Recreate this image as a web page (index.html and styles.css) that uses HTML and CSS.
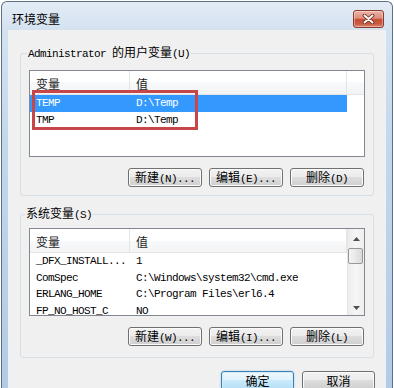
FILE: index.html
```html
<!DOCTYPE html>
<html lang="zh-CN">
<head>
  <meta charset="UTF-8">
  <title>环境变量</title>
  <link rel="stylesheet" href="styles.css">
</head>
<body>
  <div class="window">
    <div class="titlebar">
      <span class="title">环境变量</span>
      <div class="close">
        <svg width="13" height="10" viewBox="0 0 13 10">
          <path d="M2.5 1.5 L10.5 8.5 M10.5 1.5 L2.5 8.5" stroke="#6a2418" stroke-width="3.6" stroke-linecap="round"/>
          <path d="M2.5 1.5 L10.5 8.5 M10.5 1.5 L2.5 8.5" stroke="#fff" stroke-width="2" stroke-linecap="round"/>
        </svg>
      </div>
    </div>

    <div class="client">
      <fieldset class="group user">
        <legend><span class="mono">Administrator </span>的用户变量<span class="mono">(U)</span></legend>
        <div class="listbox">
          <div class="lv-head"><div class="c1">变量</div><div class="c2">值</div></div>
          <div class="row sel"><div class="c1 mono">TEMP</div><div class="c2 mono">D:\Temp</div></div>
          <div class="row"><div class="c1 mono">TMP</div><div class="c2 mono">D:\Temp</div></div>
          <div class="mark"></div>
        </div>
        <div class="btnrow">
          <button class="btn">新建<span class="mono">(N)...</span></button>
          <button class="btn">编辑<span class="mono">(E)...</span></button>
          <button class="btn">删除<span class="mono">(D)</span></button>
        </div>
      </fieldset>

      <fieldset class="group sys">
        <legend>系统变量<span class="mono">(S)</span></legend>
        <div class="listbox">
          <div class="lv">
            <div class="lv-head"><div class="c1">变量</div><div class="c2">值</div></div>
            <div class="row"><div class="c1 mono">_DFX_INSTALL...</div><div class="c2 mono">1</div></div>
            <div class="row"><div class="c1 mono">ComSpec</div><div class="c2 mono">C:\Windows\system32\cmd.exe</div></div>
            <div class="row"><div class="c1 mono">ERLANG_HOME</div><div class="c2 mono">C:\Program Files\erl6.4</div></div>
            <div class="row"><div class="c1 mono">FP_NO_HOST_C</div><div class="c2 mono">NO</div></div>
          </div>
          <div class="vscroll">
            <div class="arrow">
              <svg width="7" height="4" viewBox="0 0 7 4"><path d="M0 4 L3.5 0 L7 4 Z" fill="#505050"/></svg>
            </div>
            <div class="thumb"></div>
            <div class="track"></div>
            <div class="arrow">
              <svg width="7" height="4" viewBox="0 0 7 4"><path d="M0 0 L3.5 4 L7 0 Z" fill="#505050"/></svg>
            </div>
          </div>
        </div>
        <div class="btnrow">
          <button class="btn">新建<span class="mono">(W)...</span></button>
          <button class="btn">编辑<span class="mono">(I)...</span></button>
          <button class="btn">删除<span class="mono">(L)</span></button>
        </div>
      </fieldset>

      <div class="dlg-buttons">
        <button class="btn default">确定</button>
        <button class="btn">取消</button>
      </div>
    </div>
  </div>
</body>
</html>
```

FILE: styles.css
```css
* { box-sizing: border-box; }
body { margin: 0; background: #fff; font: 12px "Noto Sans CJK SC", sans-serif; color: #000; overflow: hidden; }
.mono { font-family: "Liberation Mono", "Noto Sans CJK SC", monospace; font-size: 11px; letter-spacing: -0.6px; }

/* window frame */
.window {
  margin: 1px 1px 0;
  height: 400px;
  padding: 0 7px;
  border: 1px solid #5d6f84;
  border-bottom: 0;
  border-radius: 6px 6px 0 0;
  background: linear-gradient(#e3ecf6, #d4e2f0 28px, #c4d7eb 140px, #b2cae5);
}
.titlebar { height: 28px; padding-top: 6px; display: flex; align-items: center; justify-content: space-between; }
.title { padding-left: 3px; line-height: 14px; }
.close {
  width: 31px;
  height: 18px;
  margin-right: 1px;
  display: flex;
  align-items: center;
  justify-content: center;
  border: 1px solid #8d3a2c;
  border-radius: 3px;
  background: linear-gradient(#ecb5a8, #dc8d7a 45%, #c54f38 52%, #c95a42 80%, #db8c74);
  box-shadow: inset 0 0 0 1px rgba(255,255,255,0.35);
}

.client {
  height: 358px;
  padding: 15px 11px 0;
  background: #f0f0f0;
  box-shadow: -1px 0 0 #edf2f8, 1px 0 0 #edf2f8;
}

/* group boxes */
.group { margin: 0; min-width: 0; padding: 0 8px 8px; border: 1px solid #d5dfe5; border-radius: 3px; }
.group legend { padding: 0 1px; margin-left: -2px; line-height: 14px; }
.group.sys { margin-top: 10px; padding-bottom: 11px; }
.group.sys legend { margin-left: -4px; }

/* list views */
.listbox { position: relative; height: 87px; margin-top: 9px; border: 1px solid #828790; background: #fff; }
.sys .listbox { height: 88px; margin-top: 6px; display: flex; }
.lv { width: 317px; overflow: hidden; }
.lv-head { display: flex; height: 24px; border-bottom: 1px solid #e5e5e5; background: linear-gradient(#fff, #fff 50%, #f8f9fa 50%, #f3f4f6); }
.lv-head div { padding: 6px 0 0 6px; line-height: 14px; color: #1e1e1e; border-right: 1px solid #e5e5e5; }
.c1 { width: 100px; flex: none; }
.c2 { width: 217px; flex: none; }
.row { display: flex; width: 317px; height: 17px; line-height: 17px; }
.row div { padding-left: 6px; white-space: nowrap; overflow: hidden; }
.row.sel { background: #3399ff; color: #fff; }
.sys .row { height: 16.5px; line-height: 16.5px; }
.mark { position: absolute; left: 2px; top: 19px; width: 166px; height: 40px; border: 3px solid #c6464a; }

.vscroll {
  width: 17px;
  flex: none;
  display: flex;
  flex-direction: column;
  border-left: 1px solid #e6e6e6;
  background: linear-gradient(to right, #ececec, #f6f6f6 50%, #eeeeee);
}
.arrow { height: 17px; display: flex; align-items: center; justify-content: center; padding-top: 2px; }
.thumb {
  height: 16px;
  margin: 2px 1px 0 0;
  border: 1px solid #979797;
  border-radius: 2px;
  background: linear-gradient(to right, #f4f4f4, #e8e8e8 50%, #d9d9d9);
}
.track { flex: 1; }

/* buttons */
.btnrow { display: flex; justify-content: flex-end; gap: 7px; margin: 11px 1px 0 0; }
.btn {
  width: 74px;
  height: 19px;
  padding: 0;
  font: inherit;
  line-height: 16px;
  color: #000;
  border: 1px solid #707070;
  border-radius: 3px;
  background: linear-gradient(#f2f2f2, #ebebeb 50%, #dddddd 50%, #cfcfcf);
  box-shadow: inset 0 0 0 1px #fbfbfb;
}
.dlg-buttons { display: flex; justify-content: flex-end; gap: 8px; margin: 13px -1px 0 0; }
.dlg-buttons .btn { width: 73px; }
.btn.default {
  border-color: #3c7fb1;
  background: linear-gradient(#eef8fd, #dff2fc 50%, #c9eafb 50%, #b5def5);
  box-shadow: inset 0 0 0 1px #d2ecfa, 0 0 2px #8cc8ea;
}
```
